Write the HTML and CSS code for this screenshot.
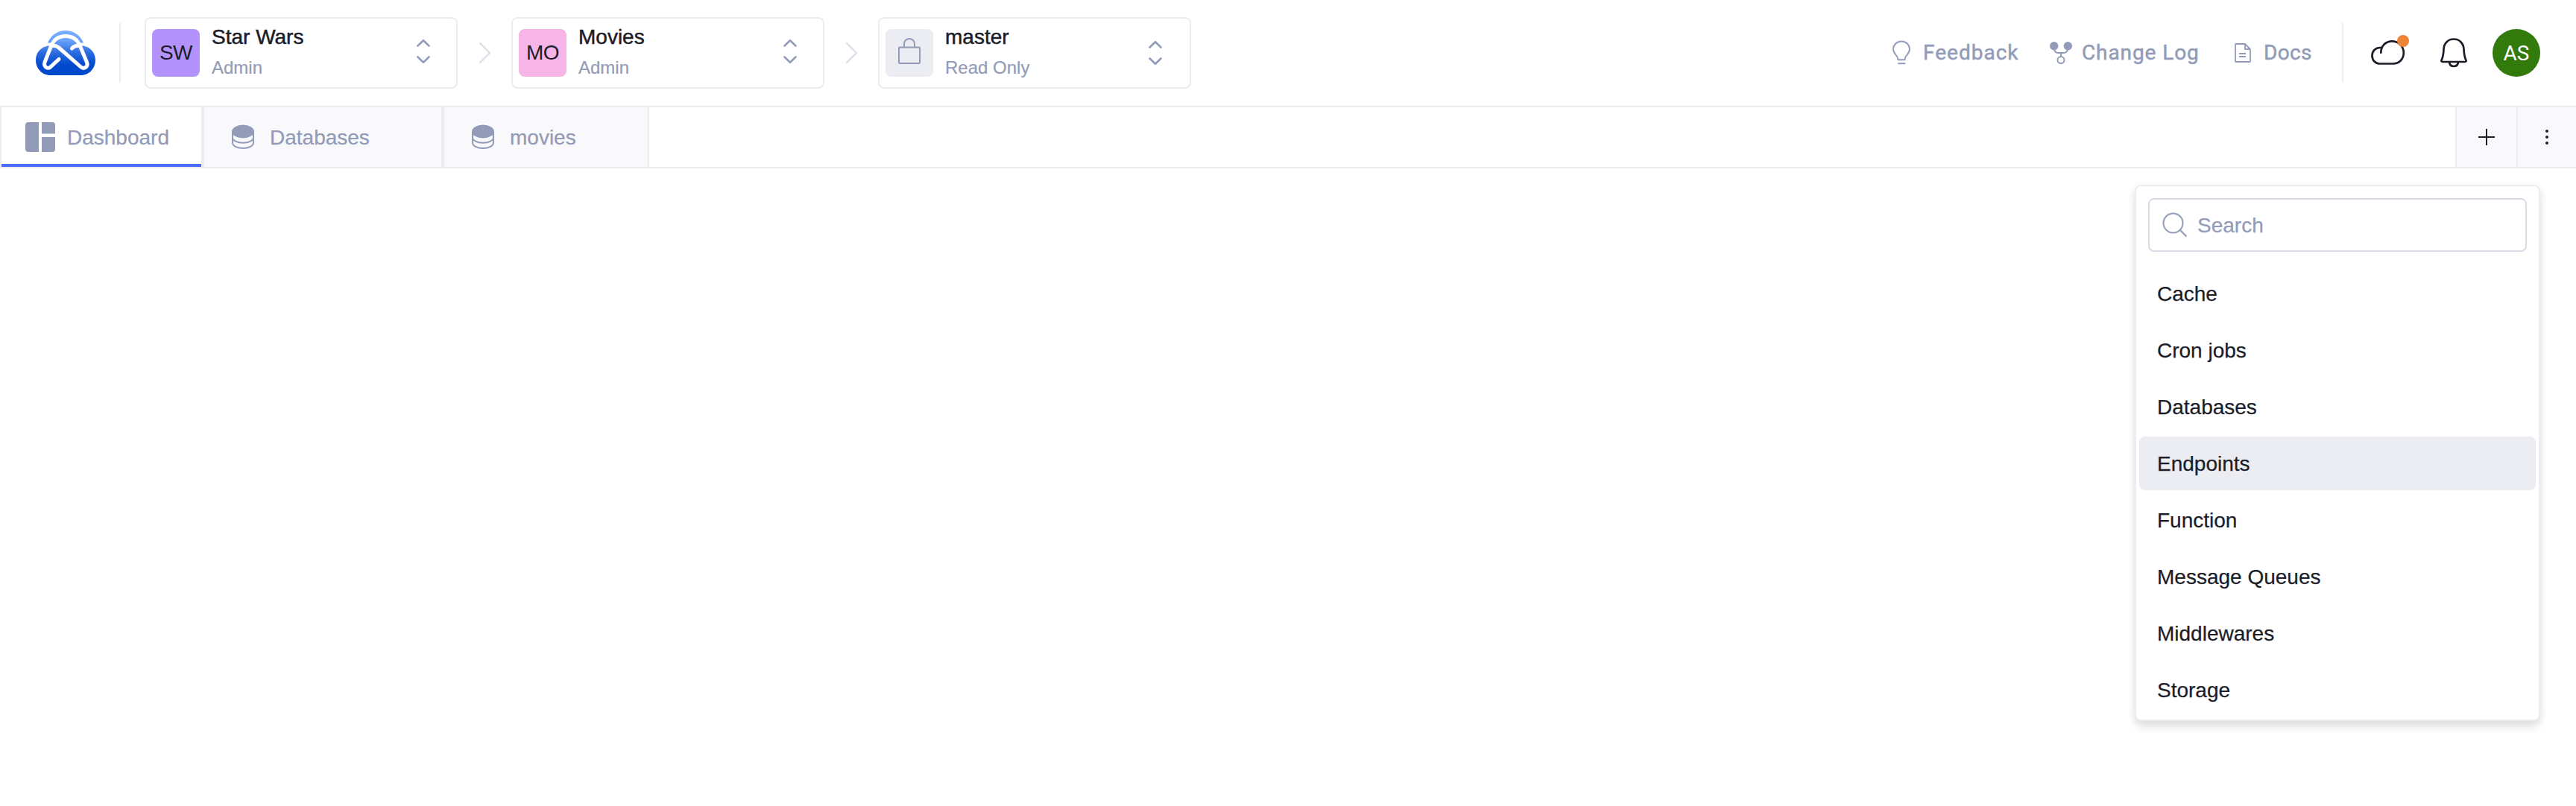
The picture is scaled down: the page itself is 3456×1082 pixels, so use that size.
FILE: index.html
```html
<!DOCTYPE html>
<html lang="en">
<head>
<meta charset="utf-8">
<title>Dashboard</title>
<link rel="stylesheet" href="styles.css">
</head>
<body>
<svg class="defs" width="0" height="0" aria-hidden="true">
  <symbol id="updown" viewBox="0 0 24 40">
    <path d="M4.500 12.500 L12 5.200 L19.500 12.500 M4.500 27.500 L12 34.800 L19.500 27.500" fill="none" stroke="currentColor" stroke-width="2.600" stroke-linecap="round" stroke-linejoin="round"/>
  </symbol>
  <symbol id="chevron" viewBox="0 0 18 30">
    <path d="M2 2 L15 15 L2 28" fill="none" stroke="currentColor" stroke-width="2.200" stroke-linecap="round" stroke-linejoin="round"/>
  </symbol>
  <symbol id="database" viewBox="0 0 30 34">
    <ellipse cx="15" cy="9.500" rx="15" ry="9" fill="currentColor"/>
    <path d="M1 9.500v8C1 21.500 7 24.700 15 24.700s14-3.200 14-7.200v-8M1 17v7.500C1 29 7 32 15 32s14-3 14-7.500V17" fill="none" stroke="currentColor" stroke-width="2"/>
  </symbol>
</svg>
<header class="header">
  <svg class="logo" viewBox="0 0 80 60">
    <defs><linearGradient id="sky" x1="0" y1="0" x2="0" y2="60" gradientUnits="userSpaceOnUse">
      <stop offset="0" stop-color="#79b0ff"/><stop offset=".22" stop-color="#69a2fb"/><stop offset=".5" stop-color="#2c6bde"/><stop offset=".78" stop-color="#0048cc"/><stop offset="1" stop-color="#0048cc"/>
    </linearGradient></defs>
    <path d="M16 16.500C20 7 28.500 0 40 0s20 7 24 16.500l1 4.500c9 1.500 15 9.500 15 18.500 0 11.500-8.500 20.500-19.500 20.500h-41C8.500 60 0 51 0 39.500 0 30.500 6 22.500 15 21z" fill="url(#sky)"/>
    <path d="M11 18.500 h11 M58 18.500 h11" stroke="#fff" stroke-width="4"/>
    <path d="M31 38.500 L19.500 49.200 C16 52 10 48.500 12 42.500 L20.500 21 C24 12 31 7.500 40 7.500 S56 12 59.500 21 L68.500 42.500 C71 49 64.500 52.500 60 48.500 L31 23 C28 20.500 25 20 22 20.500 M48.500 24 C51 21 55 20 59 20.500" fill="none" stroke="#fff" stroke-width="5" stroke-linecap="round" stroke-linejoin="round"/>
  </svg>
  <span class="divider logo-divider"></span>
  <nav class="crumbs">
    <div class="selector">
      <span class="tile purple">SW</span>
      <span class="names"><b>Star Wars</b><small>Admin</small></span>
      <svg class="updown"><use href="#updown"/></svg>
    </div>
    <svg class="chevron"><use href="#chevron"/></svg>
    <div class="selector">
      <span class="tile pink">MO</span>
      <span class="names"><b>Movies</b><small>Admin</small></span>
      <svg class="updown"><use href="#updown"/></svg>
    </div>
    <svg class="chevron"><use href="#chevron"/></svg>
    <div class="selector branch">
      <span class="tile gray">
        <svg class="lock" viewBox="0 0 30 36"><path d="M2 12.500h26a1 1 0 0 1 1 1v19.500a1 1 0 0 1-1 1H2a1 1 0 0 1-1-1V13.500a1 1 0 0 1 1-1zM8 12.500V8a7 7 0 0 1 14 0v4.500" fill="none" stroke="currentColor" stroke-width="2"/></svg>
      </span>
      <span class="names"><b>master</b><small>Read Only</small></span>
      <svg class="updown"><use href="#updown"/></svg>
    </div>
  </nav>
  <nav class="links">
    <a class="link feedback">
      <svg width="24" height="34" viewBox="0 0 24 34"><path d="M8 26.300h8c1 0 1-1 1-2 0-4 6-5.500 6-12.500C23 6 18 1.500 12 1.500S1 6 1 11.800c0 7 6 8.500 6 12.500 0 1 0 2 1 2zM8 31.200h8.500" fill="none" stroke="currentColor" stroke-width="1.900" stroke-linecap="round"/></svg>
      <span>Feedback</span>
    </a>
    <a class="link changelog">
      <svg width="30" height="30" viewBox="0 0 30 30"><circle cx="5.700" cy="5.700" r="5.700" fill="currentColor"/><circle cx="24.300" cy="5.700" r="5.700" fill="currentColor"/><circle cx="15" cy="24.600" r="4.500" fill="none" stroke="currentColor" stroke-width="2"/><path d="M6 9c0 4 2 6 5.500 6h7c3.500 0 5.500-2 5.500-6M15 15v5" fill="none" stroke="currentColor" stroke-width="2"/></svg>
      <span>Change Log</span>
    </a>
    <a class="link docs">
      <svg width="22" height="26" viewBox="0 0 22 26"><path d="M2 1h12l7 7v16a1 1 0 0 1-1 1H2a1 1 0 0 1-1-1V2a1 1 0 0 1 1-1zM14 1v7h7M6 14h9M6 18h9" fill="none" stroke="currentColor" stroke-width="1.800"/></svg>
      <span>Docs</span>
    </a>
  </nav>
  <span class="divider"></span>
  <div class="actions">
    <span class="cloud">
      <svg width="46" height="36" viewBox="0 0 46 36"><path d="M13.300 17.800C13.300 8.500 20 2.300 28 2.300c9 0 15.800 7 15.800 15.500 0 9-6.500 14.700-14 14.700H12C6 32.500 1.500 28 1.500 21.700 1.500 15.500 6 11 12 11h1.500" fill="none" stroke="currentColor" stroke-width="2.700" stroke-linecap="round" stroke-linejoin="round"/></svg>
      <i class="badge"></i>
    </span>
    <svg class="bell" width="36" height="40" viewBox="0 0 36 40"><path d="M18 1.500C10.500 1.500 5 7 4.500 14.500 4.300 22 3.800 25 1.700 29.500c-.7 1.500-.2 2.500 1.100 2.500h30.400c1.300 0 1.800-1 1.100-2.500-2.100-4.500-2.600-7.500-2.800-15C31 7 25.500 1.500 18 1.500zM12 32.500c.5 3.500 3 5.500 6 5.500s5.500-2 6-5.500" fill="none" stroke="currentColor" stroke-width="2.700" stroke-linejoin="round"/></svg>
    <span class="avatar">AS</span>
  </div>
</header>
<div class="tabs">
  <div class="tab active">
    <svg width="40" height="40" viewBox="0 0 40 40" fill="currentColor"><path d="M4 0h14v40H4a4 4 0 0 1-4-4V4a4 4 0 0 1 4-4zM22 0h14a4 4 0 0 1 4 4v11.500H22zM22 20h18v16a4 4 0 0 1-4 4H22z"/></svg>
    <span>Dashboard</span>
  </div>
  <div class="tab databases">
    <svg width="30" height="34"><use href="#database"/></svg>
    <span>Databases</span>
  </div>
  <div class="tab movies">
    <svg width="30" height="34"><use href="#database"/></svg>
    <span>movies</span>
  </div>
  <div class="tool add"><svg width="22" height="22" viewBox="0 0 22 22"><path d="M0 11h22M11 0v22" stroke="currentColor" stroke-width="2"/></svg></div>
  <div class="tool more"><svg width="4" height="20" viewBox="0 0 4 20" fill="currentColor"><circle cx="2" cy="2" r="2"/><circle cx="2" cy="10" r="2"/><circle cx="2" cy="18" r="2"/></svg></div>
</div>
<div class="menu">
  <label class="search">
    <svg width="34" height="34" viewBox="0 0 34 34"><circle cx="14.500" cy="14.500" r="13" fill="none" stroke="currentColor" stroke-width="2"/><path d="M24 24l8.500 8.500" stroke="currentColor" stroke-width="2.200"/></svg>
    <span>Search</span>
  </label>
  <ul class="items">
    <li>Cache</li>
    <li>Cron jobs</li>
    <li>Databases</li>
    <li class="hover">Endpoints</li>
    <li>Function</li>
    <li>Message Queues</li>
    <li>Middlewares</li>
    <li>Storage</li>
  </ul>
</div>
</body>
</html>
```
FILE: styles.css
```css
* { box-sizing: border-box; }
body {
  margin: 0;
  height: 1082px;
  overflow: hidden;
  background: #fff;
  color: #1b1d29;
  font: 28px/1.2 "Liberation Sans", Arial, sans-serif;
}
svg { display: block; flex: none; }
.defs { position: absolute; }

.header {
  display: flex;
  align-items: center;
  height: 144px;
  padding: 0 48px;
  border-bottom: 2px solid #ecedf3;
}
.logo { width: 80px; height: 60px; }
.divider { width: 2px; height: 80px; background: #ecedf3; flex: none; }
.logo-divider { margin: 0 32px; }

.crumbs { display: flex; align-items: center; }
.selector {
  display: flex;
  align-items: center;
  width: 420px;
  height: 96px;
  padding: 0 24px 0 8px;
  border: 2px solid #ecedf3;
  border-radius: 8px;
}
.tile {
  display: flex;
  align-items: center;
  justify-content: center;
  width: 64px;
  height: 64px;
  border-radius: 8px;
  letter-spacing: -.6px;
}
.purple { background: #b392fb; }
.pink { background: #f6b5e6; }
.gray { background: #ecedf3; color: #929bb8; }
.lock { width: 30px; height: 36px; margin-top: -5px; }
.names { display: flex; flex-direction: column; flex: 1; margin-left: 16px; padding-bottom: 2px; }
.names b { font-weight: 400; line-height: 41px; -webkit-text-stroke: .5px; }
.names small { font-size: 24px; line-height: 41px; color: #929bb8; -webkit-text-stroke: .2px; }
.updown { width: 24px; height: 40px; margin: -4px 8px 0 0; color: #929bb8; }
.branch .updown { margin: 0 10px 0 0; }
.chevron { width: 18px; height: 30px; margin: 0 26px 0 28px; color: #dcdde8; }

.links { display: flex; align-items: center; margin-left: auto; color: #929bb8; font: 400 28px/34px Roboto, sans-serif; -webkit-text-stroke: .5px; }
.link { display: flex; align-items: center; }
.link svg { -webkit-text-stroke: 0; }
.feedback { width: 211px; gap: 17px; letter-spacing: 1px; }
.changelog { width: 248px; gap: 13px; letter-spacing: .9px; }
.docs { width: 144px; gap: 17px; letter-spacing: .3px; }

.actions { display: flex; align-items: center; margin-left: 37px; }
.cloud { position: relative; }
.badge { position: absolute; left: 35px; top: -6px; width: 16px; height: 16px; border-radius: 50%; background: #ee8435; }
.bell { margin: 0 34px 0 47px; }
.avatar {
  display: flex;
  align-items: center;
  justify-content: center;
  width: 64px;
  height: 64px;
  border-radius: 50%;
  background: #317a0b;
  color: #fff;
  font: 400 28px Roboto, sans-serif;
}

.tabs { display: flex; height: 82px; border-bottom: 2px solid #ecedf3; border-left: 2px solid #ecedf3; color: #929bb8; -webkit-text-stroke: .25px; }
.tab { display: flex; align-items: center; background: #f9f9fc; border-right: 4px solid #ecedf3; }
.tab span { padding-top: 1px; }
.active { width: 272px; padding-left: 32px; gap: 16px; background: #fff; box-shadow: inset 0 -4px #4a6cff; }
.databases { width: 322px; padding-left: 37px; gap: 21px; }
.movies { width: 275px; padding-left: 37px; gap: 21px; border-right-width: 2px; }
.tool { display: flex; align-items: center; justify-content: center; background: #f9f9fc; border-left: 2px solid #ecedf3; color: #1b1d29; }
.add { width: 82px; margin-left: auto; }
.more { width: 80px; }

.menu {
  width: 544px;
  height: 720px;
  margin: 22px 48px 0 auto;
  padding: 16px 4px 4px;
  border: 2px solid #ecedf3;
  border-radius: 8px;
  background: #fff;
  box-shadow: 0 8px 12px rgba(0, 0, 0, .1), 0 2px 12px rgba(0, 0, 0, .05);
  -webkit-text-stroke: .25px;
}
.search {
  display: flex;
  align-items: center;
  gap: 13px;
  height: 72px;
  margin: 0 12px 20px;
  padding-left: 17px;
  border: 2px solid #dadbe7;
  border-radius: 8px;
  color: #929bb8;
}
.search span { padding-top: 1px; }
.items { display: flex; flex-direction: column; gap: 4px; margin: 0; padding: 0; list-style: none; }
.items li { height: 72px; padding-left: 24px; line-height: 73px; border-radius: 8px; }
.hover { background: #ecedf3; }
```
